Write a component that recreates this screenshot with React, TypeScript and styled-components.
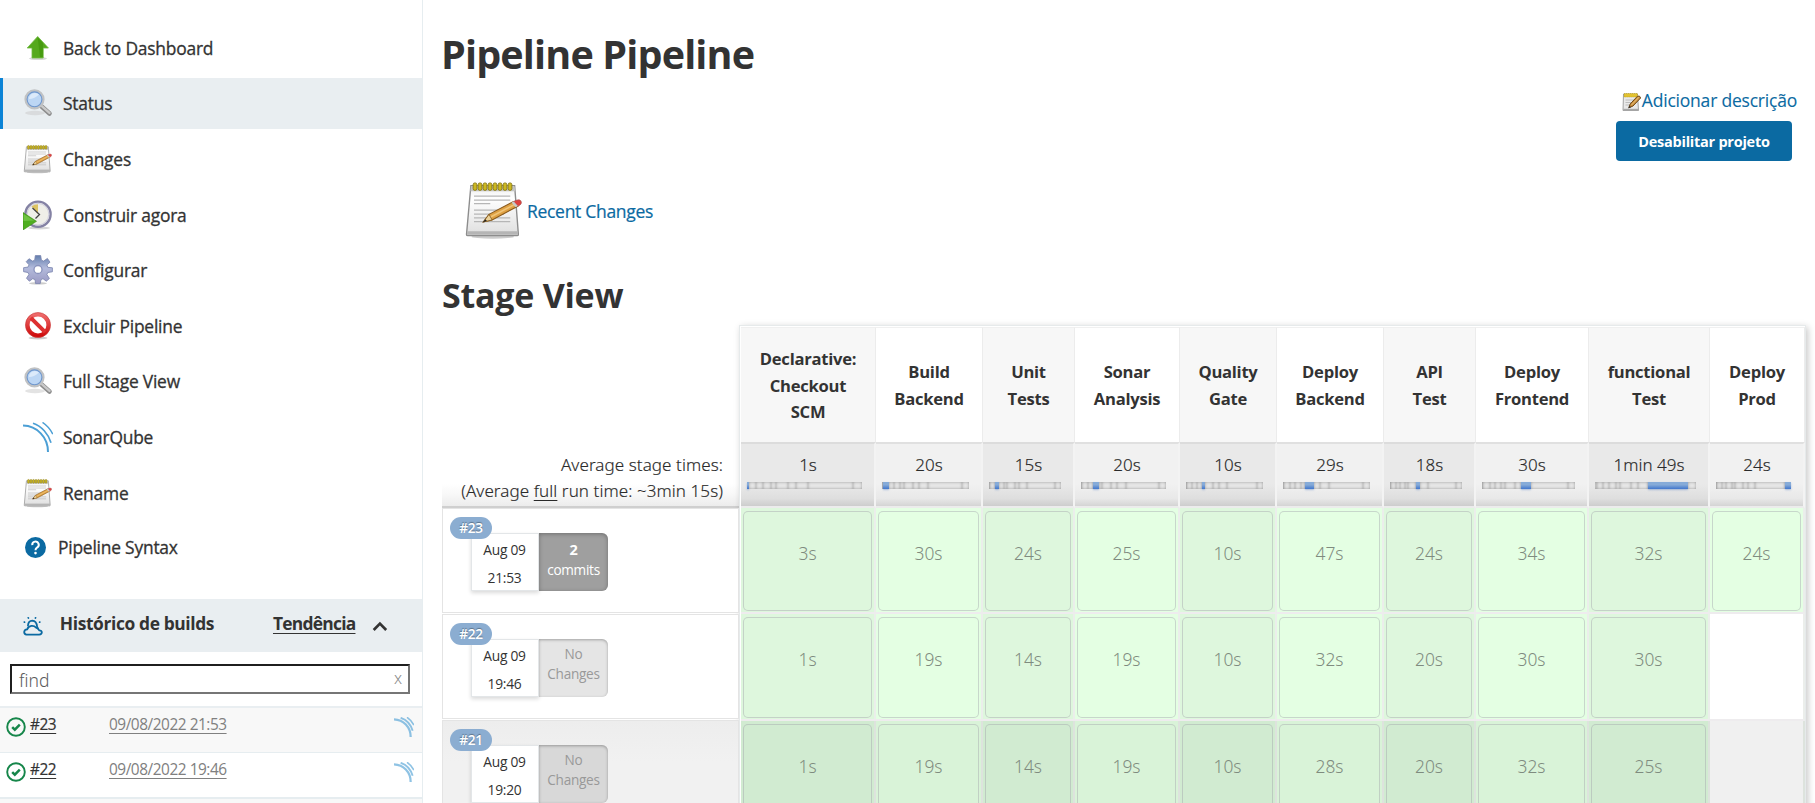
import React from 'react';
import styled, { createGlobalStyle, css } from 'styled-components';

const GlobalStyle = createGlobalStyle`
  * { box-sizing: border-box; }
  html, body { margin: 0; height: 803px; overflow: hidden; background: #fff; }
  body { font-family: 'Open Sans', 'Noto Sans', sans-serif; color: #333; }
  a { color: inherit; }
`;

const Page = styled.div`
  display: flex;
  width: 1815px;
  height: 803px;
  overflow: hidden;
`;

/* ---------- side panel ---------- */

const SidePanel = styled.aside`
  width: 423px;
  flex: none;
  height: 803px;
  overflow: hidden;
  border-right: 1px solid #e6edf0;
`;

const Tasks = styled.nav`
  display: flex;
  flex-direction: column;
  gap: 4.6px;
  padding-top: 22.4px;
  height: 599px;
`;

const Task = styled.a<{ $active?: boolean; $compact?: boolean }>`
  display: flex;
  align-items: center;
  height: ${(p) => (p.$compact ? 49 : 51)}px;
  gap: ${(p) => (p.$compact ? 12 : 10)}px;
  padding-left: ${(p) => (p.$compact ? 22 : 20)}px;
  border-left: 3px solid ${(p) => (p.$active ? '#0b83d6' : 'transparent')};
  background: ${(p) => (p.$active ? '#e9eef1' : 'transparent')};
  font-size: 17.4px;
  letter-spacing: -0.21px;
  -webkit-text-stroke: 0.3px currentColor;
  svg { flex: none; display: block; }
`;

const HistoryHeader = styled.div`
  display: flex;
  align-items: center;
  height: 53px;
  padding: 0 34px 5px 22px;
  background: #e9eef1;
  font-size: 17.4px;
  font-weight: 700;
  letter-spacing: -0.38px;
  svg { position: relative; top: 3px; }
`;

const HistoryTitle = styled.span`
  margin-left: 16px;
  width: 215px;
`;

const TrendLink = styled.a`
  width: 100px;
  letter-spacing: -0.75px;
  text-decoration: underline;
  text-underline-offset: 3px;
`;

const SearchArea = styled.div`
  padding: 12px 12px 12px 10px;
  border-bottom: 2px solid #e9eef1;
`;

const SearchBox = styled.div`
  display: flex;
  align-items: center;
  justify-content: space-between;
  height: 30px;
  padding: 1px 6px 0 7px;
  border: 2px solid;
  border-color: #1f1f1f #767676 #767676 #1f1f1f;
  font-family: 'Noto Sans', sans-serif;
  font-weight: 300;
  font-size: 17.5px;
  color: #5c5c5c;
`;

const ClearMark = styled.span`
  font-size: 16px;
  color: #888;
  line-height: 20px;
  padding-bottom: 3px;
`;

const BuildRow = styled.div<{ $odd?: boolean; $thick?: boolean }>`
  display: flex;
  align-items: center;
  height: ${(p) => (p.$thick ? 46 : 45)}px;
  padding: 0 8px 11px 6px;
  background: ${(p) => (p.$odd ? '#f8f8f8' : '#fff')};
  border-bottom: ${(p) => (p.$thick ? 2 : 1)}px solid #e6edf0;
  font-size: 15.4px;
  letter-spacing: -0.46px;
  a { text-decoration: underline; text-underline-offset: 3px; }
  svg { position: relative; top: 2px; }
`;

const BuildNumber = styled.a`
  width: 79px;
  margin-left: 4px;
  -webkit-text-stroke: 0.2px currentColor;
`;

const BuildDate = styled.a`
  flex: 1;
  color: #808080;
`;

/* ---------- main panel ---------- */

const Main = styled.main`
  flex: 1;
  min-width: 0;
  padding-left: 19px;
`;

const Title = styled.h1`
  margin: 0;
  padding-top: 29px;
  height: 88px;
  margin-left: -1px;
  font-size: 39.5px;
  line-height: 50px;
  font-weight: 700;
  letter-spacing: -0.84px;
`;

const Actions = styled.div`
  display: flex;
  flex-direction: column;
  align-items: flex-end;
  height: 84px;
`;

const DescriptionLink = styled.a`
  display: flex;
  align-items: center;
  height: 24px;
  margin: 0 18px 9px 0;
  color: #0b6aa2;
  font-size: 17.5px;
  letter-spacing: -0.21px;
  -webkit-text-stroke: 0.1px currentColor;
  svg { position: relative; top: 2px; }
`;

const DisableButton = styled.button`
  width: 176px;
  height: 40px;
  margin-right: 23px;
  padding: 0;
  border: 0;
  border-radius: 4px;
  background: #0b6aa2;
  color: #fff;
  font: 700 14.5px 'Open Sans', sans-serif;
  letter-spacing: -0.25px;
`;

const RecentChanges = styled.a`
  display: flex;
  align-items: center;
  height: 76px;
  padding-left: 22px;
  gap: 3px;
  color: #0b6aa2;
  font-size: 17.5px;
  letter-spacing: -0.3px;
  -webkit-text-stroke: 0.2px currentColor;
  span { padding-top: 2px; }
`;

const SectionTitle = styled.h2`
  margin: 0;
  padding-top: 25px;
  height: 77px;
  font-size: 34px;
  line-height: 44px;
  font-weight: 700;
  letter-spacing: -0.25px;
`;

const StageView = styled.div`
  display: flex;
  height: 520px;
`;

const RunColumn = styled.div`
  width: 297px;
  flex: none;
  padding-top: 117px;
`;

const AverageCaption = styled.div`
  height: 66px;
  padding: 10px 16px 0 0;
  border-bottom: 2px solid #cfcfcf;
  background: linear-gradient(to bottom, #fff 65%, #f8f8f8 82%, #ececec 100%);
  text-align: right;
  font: 300 17px/26.4px 'Noto Sans', sans-serif;
  letter-spacing: 0.08px;
  color: #2a2a2a;
  -webkit-text-stroke: 0.15px currentColor;
  u { text-underline-offset: 3px; }
`;

const Run = styled.div<{ $hover?: boolean }>`
  position: relative;
  height: 105px;
  margin-bottom: 1px;
  padding: 24px 0 0 28px;
  border: 1px solid #e4e4e4;
  background: ${(p) => (p.$hover ? 'linear-gradient(#ededed, #f1f1f1 40px)' : '#fff')};
`;

const RunBadge = styled.span`
  position: absolute;
  left: 7px;
  top: 8px;
  height: 22px;
  width: 42px;
  border-radius: 11px;
  background: #8badd1;
  color: #fff;
  font-size: 13.6px;
  font-weight: 600;
  line-height: 22px;
  text-align: center;
  letter-spacing: -0.2px;
  text-shadow: 0 -1px 1px rgba(0, 0, 0, 0.35);
`;

const RunInfo = styled.div`
  display: flex;
  height: 58px;
`;

const RunTime = styled.div`
  width: 68px;
  padding: 2px 1px 0 0;
  background: #fff;
  border: 1px solid #e3e6e8;
  box-shadow: 0 2px 4px rgba(0, 0, 0, 0.15);
  text-align: center;
  font-size: 13.8px;
  line-height: 27.6px;
  letter-spacing: -0.25px;
`;

const RunChanges = styled.div<{ $tone: 'commits' | 'none' | 'noneHover' }>`
  width: 69px;
  border-radius: 0 6px 6px 0;
  text-align: center;
  font-size: 13.6px;
  letter-spacing: -0.28px;
  b { display: block; font-size: 14.5px; }
  span { display: block; }
  ${(p) =>
    p.$tone === 'commits'
      ? css`
          padding-top: 7px;
          line-height: 20px;
          background: #9f9f9f;
          color: #fff;
          box-shadow: inset 0 1px 4px rgba(0, 0, 0, 0.3);
        `
      : css`
          padding-top: 5px;
          line-height: 19.6px;
          background: ${p.$tone === 'none' ? '#e5e5e5' : '#d8d8d8'};
          color: #999;
          box-shadow: inset 0 1px 3px rgba(0, 0, 0, 0.3);
        `}
`;

const StageTable = styled.div`
  width: 1067px;
  flex: none;
  padding: 1px 0 0 1px;
  border: 1px solid #e6eaeb;
  box-shadow: 2px 2px 7px rgba(0, 0, 0, 0.22);
  display: grid;
  grid-template-columns: 135px 107px 92px 105px 97px 107px 92px 113px 121px 95px;
  grid-template-rows: 115px 66px 106px 107px 107px;
`;

const StageHead = styled.div<{ $odd: boolean }>`
  display: flex;
  align-items: center;
  justify-content: center;
  padding: 2px 0 0;
  border: solid #f0f0f0;
  border-width: 1px 1px 0 0;
  border-right-color: #ececec;
  background: ${(p) => (p.$odd ? '#f7f7f7' : '#fff')};
  text-align: center;
  white-space: pre-line;
  font-size: 16.6px;
  font-weight: 700;
  line-height: 26.6px;
  letter-spacing: -0.26px;
`;

const StageAverage = styled.div<{ $odd: boolean }>`
  padding: 7.5px 5px 0 6px;
  border-top: 2px solid ${(p) => (p.$odd ? '#dcdcdc' : '#e0e0e0')};
  border-right: 2px solid #f3f3f3;
  border-bottom: 2px solid #ececec;
  background: ${(p) =>
    p.$odd
      ? 'linear-gradient(#e9e9e9 65%, #dedede 88%, #cdcdcd)'
      : 'linear-gradient(#f1f1f1 65%, #e8e8e8 88%, #d4d4d4)'};
  text-align: center;
  font: 300 17px/26px 'Noto Sans', sans-serif;
  color: #2a2a2a;
  -webkit-text-stroke: 0.15px currentColor;
`;

const Bar = styled.div`
  display: flex;
  height: 7px;
  margin: 4.5px 7px 0 0;
`;

const BarPart = styled.span<{ $on: boolean }>`
  background: ${(p) => (p.$on ? 'linear-gradient(#86abd8 40%, #4176cc)' : '#e6e6e6')};
  box-shadow: ${(p) => (p.$on ? '0 1px 2px rgba(60,110,190,.4)' : 'inset 0 0 3px rgba(0,0,0,.34)')};
`;

const StageCell = styled.div<{ $odd: boolean; $hover: boolean; $empty: boolean }>`
  --fill: ${(p) =>
    p.$empty
      ? p.$hover ? '#f0f0f0' : '#fff'
      : p.$hover
      ? p.$odd ? '#d1ebd1' : '#d9f3d8'
      : p.$odd ? '#def7dd' : '#e4ffe3'};
  padding: 3px 2px 1px;
  border-right: 2px solid ${(p) => (p.$hover ? '#dde3dd' : '#ebeeeb')};
  border-bottom: 2px solid ${(p) => (p.$hover ? '#dcdcdc' : '#eeecee')};
  background: var(--fill);
`;

const StageResult = styled.div`
  height: 100%;
  padding: 28px 0 0;
  border: 1px solid rgba(160, 160, 170, 0.42);
  border-radius: 5px;
  background: var(--fill);
  text-align: center;
  color: #7f8b7f;
  font: 300 17.4px/26px 'Noto Sans', sans-serif;
`;

/* ---------- icons ---------- */

const UpIcon = () => (
  <svg width="30" height="30" viewBox="0 0 30 30">
    <ellipse cx="15" cy="25.6" rx="9" ry="1.5" fill="#bbb" opacity=".6" />
    <path d="M14.700 3.500L25.400 15H20.200V25H9V15H4.200z" fill="#55a91c" stroke="#6fb93f" strokeWidth=".8" />
    <path d="M14.700 4.500L20 10V24H17z" fill="#3e9209" opacity=".6" />
  </svg>
);

const SearchIcon = () => (
  <svg width="30" height="30" viewBox="0 0 30 30">
    <ellipse cx="12" cy="25" rx="10" ry="2.200" fill="#ccc" opacity=".55" />
    <path d="M17.500 17.500L26.500 25.500" stroke="#8d8d8d" strokeWidth="4.600" strokeLinecap="round" />
    <path d="M18 17.300L26.500 24.900" stroke="#c9c9c9" strokeWidth="2.400" strokeLinecap="round" />
    <circle cx="11.500" cy="11.300" r="8.800" fill="#b9d4f3" stroke="#c0c2c4" strokeWidth="2.600" />
    <circle cx="11.500" cy="11.300" r="7.400" fill="#bcd6f4" stroke="#6f97cd" strokeWidth="1.100" />
    <path d="M6 11a6 6 0 0 1 10-4.500Q11 11 6 11z" fill="#dceafa" />
  </svg>
);

const NotepadIcon = ({ size = 30 }: { size?: number }) => (
  <svg width={size} height={size} viewBox="0 0 48 48">
    <defs>
      <linearGradient id={`paper${size}`} x1="0" y1="0" x2="0" y2="1">
        <stop offset="0" stopColor="#ececec" />
        <stop offset=".25" stopColor="#fff" />
        <stop offset="1" stopColor="#dedede" />
      </linearGradient>
    </defs>
    <ellipse cx="23" cy="45.300" rx="17" ry="1.600" fill="#999" opacity=".5" />
    <path d="M5.500 4.500H40.500L43.500 43.500Q43.500 44.500 42.500 44.500H3Q2 44.500 2 43.500z" fill={`url(#paper${size})`} stroke="#8d8d8d" strokeWidth="1.100" />
    <path d="M5.500 5H40.500L41 9H5.200z" fill="#c3c3c3" />
    <path d="M2.500 41H43.200V43.800H2.500z" fill="#b5b5b5" />
    {[0, 1, 2, 3, 4, 5, 6, 7].map((i) => (
      <rect key={i} x={7.3 + i * 4} y="2.300" width="3" height="6" rx="1.400" fill="#cdb820" stroke="#877811" strokeWidth=".7" />
    ))}
    <path d="M8 12.800H37M8 16H37M8 18.800H21M8 24H37M8 27.200H32M8 30.200H37M8 33.300H37" stroke="#b6b6b6" strokeWidth="1" />
    <path d="M15.500 33.500L20 27.500L39.500 17.300L43 21L22.500 32z" fill="#dfa143" stroke="#8a5a1c" strokeWidth=".9" />
    <path d="M20.500 30L41 19.300" stroke="#f0c478" strokeWidth="1.300" />
    <path d="M15.500 33.500L20 27.500L22.500 32z" fill="#ecd29a" stroke="#7d5418" strokeWidth=".6" />
    <path d="M15 33.900L18.300 32.600L17 31.300z" fill="#222" />
    <path d="M39.500 17.300Q44 14.800 45.500 16.700Q47 19.300 43 21z" fill="#e0413f" stroke="#a55" strokeWidth=".6" />
    <path d="M38 18L39.800 17.100L43.100 20.800L41.300 21.800z" fill="#c9c9c9" />
  </svg>
);

const EditNoteIcon = () => (
  <svg width="20" height="20" viewBox="0 0 20 20">
    <path d="M1.500 2H15.500L16.500 18.500H1z" fill="#e9e9e9" stroke="#999" strokeWidth=".9" />
    <path d="M1.200 16.800H16.300V18.500H1.200z" fill="#a8a8a8" />
    <path d="M2 1.500H15.500V5H2z" fill="#e2c230" stroke="#b89a1c" strokeWidth=".6" strokeDasharray="1.200 .8" />
    <path d="M3.500 8H13M3.500 10.500H10M3.500 13H8" stroke="#bdbdbd" strokeWidth="1" />
    <path d="M6.800 15.800L8.200 12L15.500 4.200Q18 3.200 18.600 6L11 14z" fill="#c98f3d" stroke="#6e4716" strokeWidth="1" />
    <path d="M9.500 13L17 5.200" stroke="#ecc27c" strokeWidth="1" />
    <path d="M6.300 16.300L7.400 13.800L9 15.200z" fill="#333" />
  </svg>
);

const BuildNowIcon = () => (
  <svg width="30" height="30" viewBox="0 0 30 30">
    <ellipse cx="16" cy="28" rx="11" ry="1.500" fill="#bbb" opacity=".6" />
    <circle cx="15" cy="14.200" r="12.600" fill="#efefe8" stroke="#8482a4" strokeWidth="2.400" />
    <circle cx="15" cy="14.200" r="10.800" fill="none" stroke="#cfcede" strokeWidth="1" />
    <path d="M15 14L8.500 6.500Q11 4.300 15 4.200z" fill="#dcc362" />
    <path d="M9.500 8L16.500 14.500L12.500 18.500" fill="none" stroke="#444" strokeWidth="1.300" />
    <path d="M0 12.500L13.500 21.300L0 30z" fill="#4fae20" stroke="#3a8c12" strokeWidth=".6" />
    <path d="M.5 14L11 20.500L.5 21z" fill="#86d15a" opacity=".6" />
  </svg>
);

const GearIcon = () => (
  <svg width="30" height="30" viewBox="0 0 30 30">
    <defs>
      <linearGradient id="gear" gradientUnits="userSpaceOnUse" x1="15" y1="0" x2="15" y2="29">
        <stop offset="0" stopColor="#5f7cab" />
        <stop offset=".45" stopColor="#b3bbdc" />
        <stop offset="1" stopColor="#9a98c2" />
      </linearGradient>
    </defs>
    <ellipse cx="15" cy="28.300" rx="9" ry="1.300" fill="#ccc" />
    <path
      d="M12.300 .6H17.700L18.400 5.200L20.600 6.100L24.400 3.400L27 7.200L23.900 9.900L24.800 12.300L29.400 12.800V16.800L24.800 17.500L23.900 19.600L26.400 23.500L23.300 26.200L20 23.700L18 24.600L17.200 28.600H12.600L12 24.600L9.700 23.700L6.400 26.200L3.500 23.200L5.900 19.600L5 17.500L.6 16.700V12.700L5 12.100L6 9.800L3.200 6.700L6 3.700L9.500 6.100L11.700 5.200z"
      fill="url(#gear)"
      stroke="#7983ad"
      strokeWidth=".8"
      strokeLinejoin="round"
    />
    <circle cx="15" cy="14.500" r="4" fill="#fff" stroke="#8a93bd" strokeWidth="1.300" />
  </svg>
);

const StopIcon = () => (
  <svg width="30" height="30" viewBox="0 0 30 30">
    <defs>
      <linearGradient id="stop" x1="0" y1="0" x2="0" y2="1">
        <stop offset="0" stopColor="#ee6a6a" />
        <stop offset="1" stopColor="#cf0d0d" />
      </linearGradient>
    </defs>
    <ellipse cx="15" cy="27" rx="9.500" ry="1.400" fill="#aaa" opacity=".6" />
    <circle cx="15" cy="14" r="10.500" fill="#fff" stroke="url(#stop)" strokeWidth="4.200" />
    <path d="M7.800 6.800L22.200 21.200" stroke="#dd3030" strokeWidth="4" />
    <circle cx="15" cy="14" r="12.500" fill="none" stroke="#c83a3a" strokeWidth=".6" />
  </svg>
);

const SonarIcon = ({ size = 30, faded = false }: { size?: number; faded?: boolean }) => (
  <svg width={size} height={size} viewBox="0 0 30 30" fill="none" stroke="#4b9fd5" opacity={faded ? 0.62 : 1}>
    <path d="M0 3.600C14 4 25 15 25 30" strokeWidth={faded ? 3.4 : 2} />
    <path d="M10 1.200C18.500 4 25.500 12 28 20.800" strokeWidth={faded ? 2.8 : 1.7} />
    <path d="M19.500 .4C23.500 3 27.500 7.500 29.800 12.200" strokeWidth={faded ? 2.2 : 1.4} />
  </svg>
);

const HelpIcon = () => (
  <svg width="21" height="21" viewBox="0 0 24 24">
    <circle cx="12" cy="12" r="12" fill="#0b6aa2" />
    <path d="M8.300 9.200A3.700 3.700 0 1 1 13.700 12.200C12.400 13 12 13.500 12 15" fill="none" stroke="#fff" strokeWidth="2.300" />
    <circle cx="12" cy="18.400" r="1.500" fill="#fff" />
  </svg>
);

const WeatherIcon = () => (
  <svg width="22" height="21" viewBox="0 0 22 21" fill="none" stroke="#0b6aa2" strokeWidth="1.800" strokeLinecap="round" strokeLinejoin="round">
    <path d="M4.500 18.600H17.300Q20 18.400 20 16.200Q19.900 14.500 17.300 14.300Q16.500 11.900 14 11.600Q12.500 9.500 9.500 9.800Q6.200 10.200 5.200 13.400Q2.300 13.700 2.200 16.200Q2.300 18.400 4.500 18.600z" />
    <path d="M6 9.600Q6.400 4.800 10.400 4.600Q14.600 4.800 15.200 10.500L16 12.500" />
    <path d="M6.300 1.700L6.500 2M13.700 1.700L13.500 2M2.300 6L2.600 6.200M18 6L17.700 6.200" strokeWidth="1.700" />
  </svg>
);

const ChevronIcon = () => (
  <svg width="16" height="11" viewBox="0 0 16 11" fill="none" stroke="#333" strokeWidth="2.700">
    <path d="M1.700 9L8 2.600L14.300 9" />
  </svg>
);

const SuccessIcon = () => (
  <svg width="20" height="20" viewBox="0 0 20 20" fill="none" stroke="#16864a">
    <circle cx="10" cy="10" r="8.800" strokeWidth="1.900" />
    <path d="M6.200 10.200L8.800 12.700L13.800 7.700" strokeWidth="2.500" />
  </svg>
);

/* ---------- data ---------- */

const tasks = [
  { label: 'Back to Dashboard', icon: <UpIcon /> },
  { label: 'Status', icon: <SearchIcon />, active: true },
  { label: 'Changes', icon: <NotepadIcon /> },
  { label: 'Construir agora', icon: <BuildNowIcon /> },
  { label: 'Configurar', icon: <GearIcon /> },
  { label: 'Excluir Pipeline', icon: <StopIcon /> },
  { label: 'Full Stage View', icon: <SearchIcon /> },
  { label: 'SonarQube', icon: <SonarIcon /> },
  { label: 'Rename', icon: <NotepadIcon /> },
  { label: 'Pipeline Syntax', icon: <HelpIcon />, compact: true },
];

const stages = [
  { name: 'Declarative:\nCheckout\nSCM', avg: '1s', runs: ['3s', '1s', '1s'] },
  { name: 'Build\nBackend', avg: '20s', runs: ['30s', '19s', '19s'] },
  { name: 'Unit\nTests', avg: '15s', runs: ['24s', '14s', '14s'] },
  { name: 'Sonar\nAnalysis', avg: '20s', runs: ['25s', '19s', '19s'] },
  { name: 'Quality\nGate', avg: '10s', runs: ['10s', '10s', '10s'] },
  { name: 'Deploy\nBackend', avg: '29s', runs: ['47s', '32s', '28s'] },
  { name: 'API\nTest', avg: '18s', runs: ['24s', '20s', '20s'] },
  { name: 'Deploy\nFrontend', avg: '30s', runs: ['34s', '30s', '32s'] },
  { name: 'functional\nTest', avg: '1min 49s', runs: ['32s', '30s', '25s'] },
  { name: 'Deploy\nProd', avg: '24s', runs: ['24s', '', ''] },
];

const stageShare = [1.5, 6.7, 5.5, 7.2, 4, 10.6, 6.8, 10.4, 39.5, 7.8];

export default function App() {
  return (
    <Page>
      <GlobalStyle />
      <SidePanel>
        <Tasks>
          {tasks.map((t) => (
            <Task key={t.label} $active={t.active} $compact={t.compact}>
              {t.icon}
              {t.label}
            </Task>
          ))}
        </Tasks>
        <HistoryHeader>
          <WeatherIcon />
          <HistoryTitle>Histórico de builds</HistoryTitle>
          <TrendLink>Tendência</TrendLink>
          <ChevronIcon />
        </HistoryHeader>
        <SearchArea>
          <SearchBox>
            <span>find</span>
            <ClearMark>x</ClearMark>
          </SearchBox>
        </SearchArea>
        <BuildRow $odd>
          <SuccessIcon />
          <BuildNumber>#23</BuildNumber>
          <BuildDate>09/08/2022 21:53</BuildDate>
          <SonarIcon size={20} faded />
        </BuildRow>
        <BuildRow $thick>
          <SuccessIcon />
          <BuildNumber>#22</BuildNumber>
          <BuildDate>09/08/2022 19:46</BuildDate>
          <SonarIcon size={20} faded />
        </BuildRow>
        <BuildRow $odd />
      </SidePanel>

      <Main>
        <Title>Pipeline Pipeline</Title>
        <Actions>
          <DescriptionLink>
            <EditNoteIcon />
            Adicionar descrição
          </DescriptionLink>
          <DisableButton>Desabilitar projeto</DisableButton>
        </Actions>
        <RecentChanges>
          <NotepadIcon size={60} />
          <span>Recent Changes</span>
        </RecentChanges>
        <SectionTitle>Stage View</SectionTitle>
        <StageView>
          <RunColumn>
            <AverageCaption>
              Average stage times:
              <br />
              (Average <u>full</u> run time: ~3min 15s)
            </AverageCaption>
            <Run>
              <RunInfo>
                <RunTime>Aug 09<br />21:53</RunTime>
                <RunChanges $tone="commits"><b>2</b><span>commits</span></RunChanges>
              </RunInfo>
              <RunBadge>#23</RunBadge>
            </Run>
            <Run>
              <RunInfo>
                <RunTime>Aug 09<br />19:46</RunTime>
                <RunChanges $tone="none"><span>No</span><span>Changes</span></RunChanges>
              </RunInfo>
              <RunBadge>#22</RunBadge>
            </Run>
            <Run $hover>
              <RunInfo>
                <RunTime>Aug 09<br />19:20</RunTime>
                <RunChanges $tone="noneHover"><span>No</span><span>Changes</span></RunChanges>
              </RunInfo>
              <RunBadge>#21</RunBadge>
            </Run>
          </RunColumn>
          <StageTable>
            {stages.map((s, i) => (
              <StageHead key={s.name} $odd={i % 2 === 0}>{s.name}</StageHead>
            ))}
            {stages.map((s, i) => (
              <StageAverage key={s.name} $odd={i % 2 === 0}>
                {s.avg}
                <Bar>
                  {stageShare.map((share, j) => (
                    <BarPart key={j} $on={i === j} style={{ width: `${share}%` }} />
                  ))}
                </Bar>
              </StageAverage>
            ))}
            {[0, 1, 2].map((run) =>
              stages.map((s, i) => (
                <StageCell key={`${run}-${i}`} $odd={i % 2 === 0} $hover={run === 2} $empty={!s.runs[run]}>
                  {s.runs[run] && <StageResult>{s.runs[run]}</StageResult>}
                </StageCell>
              ))
            )}
          </StageTable>
        </StageView>
      </Main>
    </Page>
  );
}
